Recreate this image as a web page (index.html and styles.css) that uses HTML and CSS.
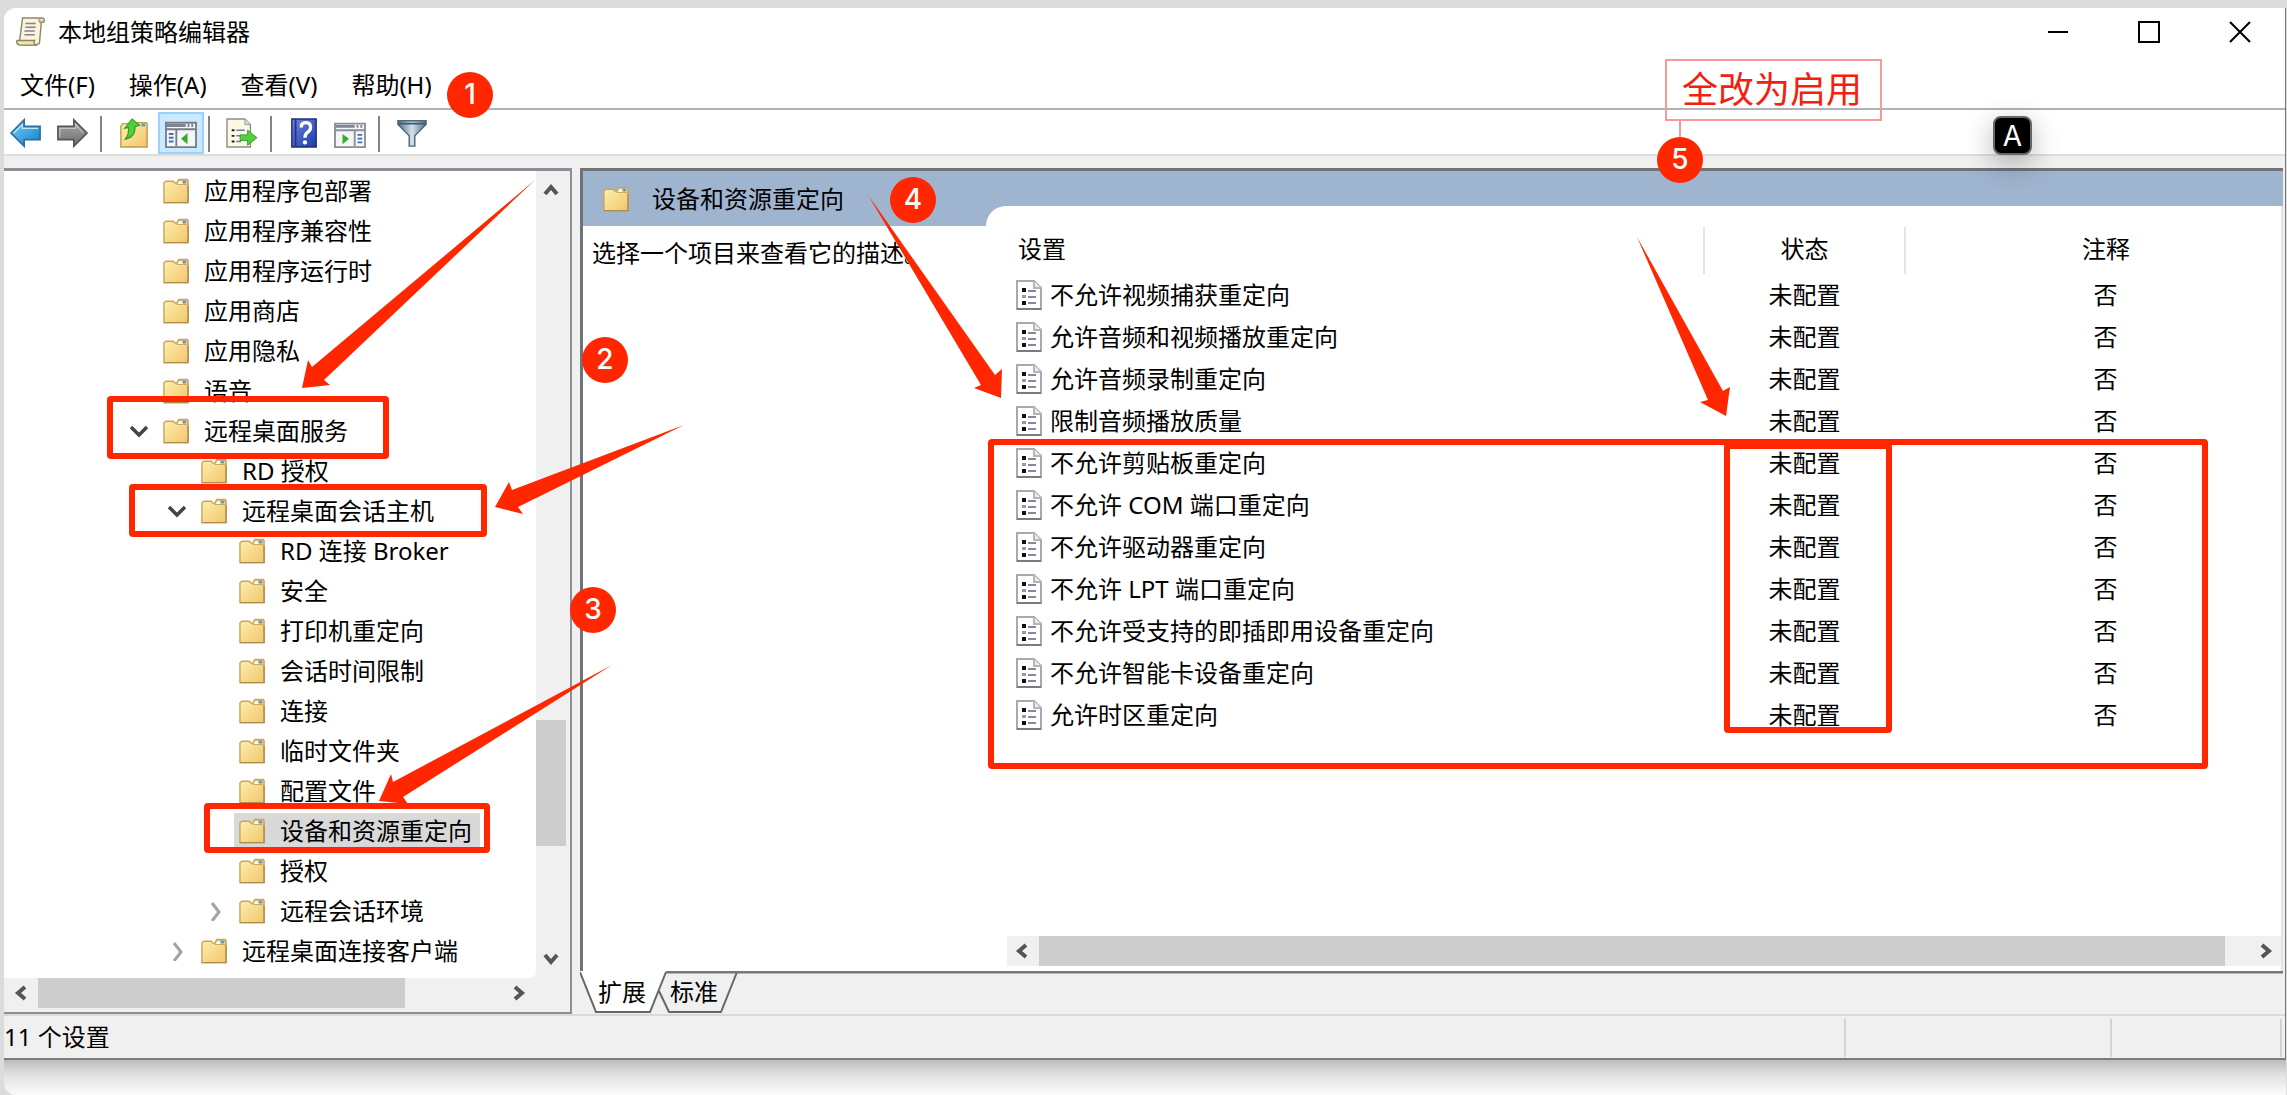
FILE: index.html
```html
<!DOCTYPE html>
<html lang="zh-CN">
<head>
<meta charset="utf-8">
<title>本地组策略编辑器</title>
<link rel="stylesheet" href="styles.css">
</head>
<body>
<svg class="defs" aria-hidden="true">
  <defs>
    <linearGradient id="gFolder" x1="0" y1="0" x2="1" y2="1"><stop offset="0" stop-color="#fff0b0"/><stop offset="1" stop-color="#efc66c"/></linearGradient>
    <linearGradient id="gBlue" x1="0" y1="0" x2="1" y2="1"><stop offset="0" stop-color="#7fd0f8"/><stop offset="1" stop-color="#0a7fd0"/></linearGradient>
    <linearGradient id="gGray" x1="0" y1="0" x2="0" y2="1"><stop offset="0" stop-color="#a8a8a8"/><stop offset="1" stop-color="#6f6f6f"/></linearGradient>
    <linearGradient id="gHelp" x1="0" y1="0" x2="1" y2="1"><stop offset="0" stop-color="#6c86e0"/><stop offset="1" stop-color="#1c3aa8"/></linearGradient>
    <linearGradient id="gFunnel" x1="0" y1="0" x2="1" y2="0"><stop offset="0" stop-color="#4f6f86"/><stop offset=".5" stop-color="#d4e2ea"/><stop offset="1" stop-color="#4f6f86"/></linearGradient>
  </defs>
  <symbol id="folder" viewBox="0 0 28 28">
    <path d="M1 5.500l2-2h8l2 2h2l2-4h9l1 1v24H1z" fill="url(#gFolder)" stroke="#cba45a" stroke-width="1.500"/>
    <path d="M15 7l2-4.500h9V7z" fill="#fdf6dc" stroke="#cba45a"/><rect x="21" y="3" width="4" height="3" fill="#5a9bd0"/>
    <path d="M1 26.500h26V8" fill="none" stroke="#b08c48" stroke-width="1.500"/>
  </symbol>
  <symbol id="policy" viewBox="0 0 26 30">
    <path d="M1 1h17l7 7v21H1z" fill="#fff" stroke="#a9a9a9" stroke-width="2"/><path d="M18 1v7h7" fill="#ececec" stroke="#b5b5b5" stroke-width="2"/>
    <path d="M1 29h24" stroke="#7c7c7c" stroke-width="2"/>
    <path d="M6 8h4v4H6zM6 21h4v4H6z" fill="#111"/><path d="M6 15h4v3H6z" fill="#9a98a8"/>
    <path d="M12 11h8M12 17h8M12 23h8" stroke="#8a879c" stroke-width="2"/>
  </symbol>
  <symbol id="down" viewBox="0 0 20 20"><path d="M2 6l8 8 8-8" fill="none" stroke="#444" stroke-width="3.500"/></symbol>
  <symbol id="right" viewBox="0 0 20 20"><path d="M7 2l7 9-7 9" fill="none" stroke="#a3a3a3" stroke-width="3"/></symbol>
  <symbol id="arrow" viewBox="0 0 16 16"><path d="M2 11l6-7 6 7" fill="none" stroke="#555" stroke-width="4"/></symbol>
</svg>

<main class="window">
  <header class="titlebar">
    <svg class="app-icon" viewBox="0 0 32 32"><path d="M7 1h20q4 0 3 4l-3 1-2 22-4 2H6L4 24z" fill="#fbf4d8" stroke="#8d8768" stroke-width="1.500"/><path d="M25 2q-2 4 2 4l3-1" fill="#c9bd90" stroke="#8d8768"/><path d="M1 25h19q-2 3 1 5H4q-4-1-3-5z" fill="#f4e5ad" stroke="#8d8768" stroke-width="1.500"/><path d="M10 7h11M10 11h11M9 15h11M9 19h11" stroke="#83819f" stroke-width="1.500"/></svg>
    <h1>本地组策略编辑器</h1>
    <div class="window-buttons">
      <button type="button" aria-label="最小化"><svg viewBox="0 0 24 24"><path d="M2 12h20" stroke="#000" stroke-width="2"/></svg></button>
      <button type="button" aria-label="最大化"><svg viewBox="0 0 24 24"><path d="M2 2h20v20H2z" fill="none" stroke="#000" stroke-width="2"/></svg></button>
      <button type="button" aria-label="关闭"><svg viewBox="0 0 24 24"><path d="M2 2l20 20M22 2L2 22" stroke="#000" stroke-width="2"/></svg></button>
    </div>
  </header>

  <nav class="menubar">
    <button type="button">文件(F)</button><button type="button">操作(A)</button><button type="button">查看(V)</button><button type="button">帮助(H)</button>
  </nav>

  <div class="toolbar">
    <button type="button" aria-label="后退"><svg viewBox="0 0 34 32"><path d="M1 16L15 2v7h17v14H15v7z" fill="url(#gBlue)" stroke="#2c6fa8" stroke-width="1.800"/><path d="M4 16l9-9v4h17" fill="none" stroke="#bfe8ff" stroke-width="1.200"/></svg></button>
    <button type="button" aria-label="前进"><svg viewBox="0 0 34 32"><path d="M33 16L19 2v7H2v14h17v7z" fill="url(#gGray)" stroke="#555" stroke-width="1.800"/><path d="M4 21V11h17V7l8 9" fill="none" stroke="#c4c4c4" stroke-width="1.200"/></svg></button>
    <span class="sep"></span>
    <button type="button" aria-label="上一级"><svg viewBox="0 0 34 32"><path d="M3 9l2-3h8l2 3h4l2-4h9l1 1v25H3z" fill="url(#gFolder)" stroke="#c09a4c" stroke-width="1.500"/><rect x="25" y="6" width="4" height="3" fill="#5a9bd0"/><path d="M7 23q5-4 4-13l-4 1 8-10 8 7-5 1q1 11-11 14z" fill="#52cf3d" stroke="#2f9a24" stroke-width="1.200"/></svg></button>
    <button type="button" class="active" aria-label="显示/隐藏控制台树" aria-pressed="true"><svg viewBox="0 0 34 32"><path d="M1 5h32v26H1z" fill="#f5f6f8" stroke="#777d88" stroke-width="2"/><path d="M2 8h20M24 8h2M28 8h2" stroke="#7d8794" stroke-width="3"/><path d="M1 12h32M12 12v18" stroke="#777d88" stroke-width="2"/><path d="M4 17h5M4 21h5M4 25h5" stroke="#3e6fb4" stroke-width="2"/><path d="M24 16v12l-7-6z" fill="#35ad24"/></svg></button>
    <span class="sep"></span>
    <button type="button" aria-label="导出列表"><svg viewBox="0 0 34 32"><path d="M1 1h19l6 6v24H1z" fill="#fbf9e6" stroke="#8e8c80" stroke-width="1.500"/><path d="M20 1v6h6" fill="#e2dfd0" stroke="#999"/><path d="M6 12h3v2H6zM6 18h3v2H6zM6 24h3v2H6z" fill="#222"/><path d="M11 13h9M11 19h5M11 25h5" stroke="#77749a" stroke-width="1.500"/><path d="M15 18h8v-5l10 8-10 8v-5h-8z" fill="#55cf3e" stroke="#369c28"/></svg></button>
    <span class="sep"></span>
    <button type="button" aria-label="帮助"><svg viewBox="0 0 34 32"><path d="M4 1h26v30H4z" fill="url(#gHelp)" stroke="#203078" stroke-width="1.500"/><path d="M8 1v30" stroke="#22368c" stroke-width="2"/><path d="M14 10q0-5 5-5t5 5q0 3-3 5t-3 6" fill="none" stroke="#fff" stroke-width="3.500"/><circle cx="18" cy="26" r="2.300" fill="#fff"/></svg></button>
    <button type="button" aria-label="显示/隐藏操作窗格"><svg viewBox="0 0 34 32"><path d="M1 6h32v25H1z" fill="#f5f6f8" stroke="#8a8e96" stroke-width="2"/><path d="M2 9h20M24 9h2M28 9h2" stroke="#7d8794" stroke-width="3"/><path d="M1 13h32M22 13v17" stroke="#8a8e96" stroke-width="2"/><path d="M25 18h5M25 22h5M25 26h5" stroke="#3e6fb4" stroke-width="2"/><path d="M9 17v11l7-6z" fill="#35ad24"/></svg></button>
    <span class="sep"></span>
    <button type="button" aria-label="筛选"><svg viewBox="0 0 34 32"><path d="M2 3h30v4L20 19v11h-6V19L2 7z" fill="url(#gFunnel)" stroke="#4d687b" stroke-width="1.500"/><path d="M3 6h28" stroke="#3f5a6e" stroke-width="2"/></svg></button>
  </div>

  <div class="panes">
    <section class="tree-pane">
      <ul class="tree">
        <li><span class="twist"></span><span class="node"><svg><use href="#folder"/></svg>应用程序包部署</span></li>
        <li><span class="twist"></span><span class="node"><svg><use href="#folder"/></svg>应用程序兼容性</span></li>
        <li><span class="twist"></span><span class="node"><svg><use href="#folder"/></svg>应用程序运行时</span></li>
        <li><span class="twist"></span><span class="node"><svg><use href="#folder"/></svg>应用商店</span></li>
        <li><span class="twist"></span><span class="node"><svg><use href="#folder"/></svg>应用隐私</span></li>
        <li><span class="twist"></span><span class="node"><svg><use href="#folder"/></svg>语音</span></li>
        <li><svg class="twist"><use href="#down"/></svg><span class="node"><svg><use href="#folder"/></svg>远程桌面服务</span></li>
        <li class="l2"><span class="twist"></span><span class="node"><svg><use href="#folder"/></svg>RD 授权</span></li>
        <li class="l2"><svg class="twist"><use href="#down"/></svg><span class="node"><svg><use href="#folder"/></svg>远程桌面会话主机</span></li>
        <li class="l3"><span class="twist"></span><span class="node"><svg><use href="#folder"/></svg>RD 连接 Broker</span></li>
        <li class="l3"><span class="twist"></span><span class="node"><svg><use href="#folder"/></svg>安全</span></li>
        <li class="l3"><span class="twist"></span><span class="node"><svg><use href="#folder"/></svg>打印机重定向</span></li>
        <li class="l3"><span class="twist"></span><span class="node"><svg><use href="#folder"/></svg>会话时间限制</span></li>
        <li class="l3"><span class="twist"></span><span class="node"><svg><use href="#folder"/></svg>连接</span></li>
        <li class="l3"><span class="twist"></span><span class="node"><svg><use href="#folder"/></svg>临时文件夹</span></li>
        <li class="l3"><span class="twist"></span><span class="node"><svg><use href="#folder"/></svg>配置文件</span></li>
        <li class="l3"><span class="twist"></span><span class="node selected"><svg><use href="#folder"/></svg>设备和资源重定向</span></li>
        <li class="l3"><span class="twist"></span><span class="node"><svg><use href="#folder"/></svg>授权</span></li>
        <li class="l3"><svg class="twist"><use href="#right"/></svg><span class="node"><svg><use href="#folder"/></svg>远程会话环境</span></li>
        <li class="l2"><svg class="twist"><use href="#right"/></svg><span class="node"><svg><use href="#folder"/></svg>远程桌面连接客户端</span></li>
      </ul>
      <div class="scroll vertical">
        <button type="button" aria-label="向上滚动"><svg><use href="#arrow"/></svg></button>
        <div class="track"><div class="thumb"></div></div>
        <button type="button" class="to-down" aria-label="向下滚动"><svg><use href="#arrow"/></svg></button>
      </div>
      <div class="scroll horizontal tree-scroll">
        <button type="button" class="to-left" aria-label="向左滚动"><svg><use href="#arrow"/></svg></button>
        <div class="track"><div class="thumb"></div></div>
        <button type="button" class="to-right" aria-label="向右滚动"><svg><use href="#arrow"/></svg></button>
      </div>
    </section>

    <section class="detail-pane">
      <div class="detail">
        <div class="summary">
          <h2><svg><use href="#folder"/></svg>设备和资源重定向</h2>
          <p>选择一个项目来查看它的描述。</p>
        </div>
        <div class="list-wrap">
          <div class="list">
            <table>
              <colgroup><col><col class="c-state"><col class="c-note"></colgroup>
              <thead><tr><th>设置</th><th>状态</th><th>注释</th></tr></thead>
              <tbody>
                <tr><td><svg><use href="#policy"/></svg>不允许视频捕获重定向</td><td>未配置</td><td>否</td></tr>
                <tr><td><svg><use href="#policy"/></svg>允许音频和视频播放重定向</td><td>未配置</td><td>否</td></tr>
                <tr><td><svg><use href="#policy"/></svg>允许音频录制重定向</td><td>未配置</td><td>否</td></tr>
                <tr><td><svg><use href="#policy"/></svg>限制音频播放质量</td><td>未配置</td><td>否</td></tr>
                <tr><td><svg><use href="#policy"/></svg>不允许剪贴板重定向</td><td>未配置</td><td>否</td></tr>
                <tr><td><svg><use href="#policy"/></svg>不允许 COM 端口重定向</td><td>未配置</td><td>否</td></tr>
                <tr><td><svg><use href="#policy"/></svg>不允许驱动器重定向</td><td>未配置</td><td>否</td></tr>
                <tr><td><svg><use href="#policy"/></svg>不允许 LPT 端口重定向</td><td>未配置</td><td>否</td></tr>
                <tr><td><svg><use href="#policy"/></svg>不允许受支持的即插即用设备重定向</td><td>未配置</td><td>否</td></tr>
                <tr><td><svg><use href="#policy"/></svg>不允许智能卡设备重定向</td><td>未配置</td><td>否</td></tr>
                <tr><td><svg><use href="#policy"/></svg>允许时区重定向</td><td>未配置</td><td>否</td></tr>
              </tbody>
            </table>
            <div class="scroll horizontal list-scroll">
              <button type="button" class="to-left" aria-label="向左滚动"><svg><use href="#arrow"/></svg></button>
              <div class="track"><div class="thumb"></div></div>
              <button type="button" class="to-right" aria-label="向右滚动"><svg><use href="#arrow"/></svg></button>
            </div>
          </div>
        </div>
      </div>
      <div class="tabs">
        <svg class="tab-shapes" aria-hidden="true">
          <path d="M0 0h86L70 41H16z" fill="#fff"/>
          <path d="M0 1l16 40h54L86 1" fill="none" stroke="#666" stroke-width="2"/>
          <path d="M79 20l10 21h52L157 1" fill="none" stroke="#666" stroke-width="2"/>
          <line x1="86" y1="1" x2="100%" y2="1" stroke="#777" stroke-width="3"/>
        </svg>
        <button type="button">扩展</button><button type="button">标准</button>
      </div>
    </section>
  </div>

  <footer class="statusbar"><span>11 个设置</span><span></span><span></span></footer>
</main>
<div class="window-shadow"></div>

<div class="annotations">
  <div class="box b1"></div><div class="box b2"></div><div class="box b3"></div><div class="box b4"></div><div class="box b5"></div>
  <svg class="arrows" aria-hidden="true">
    <g fill="#ff2600">
      <path d="M535 180L312 367l-4-7-6 28 28-3-6-5z"/>
      <path d="M684 425L512 490l-3-8-14 25 28 7-5-7z"/>
      <path d="M612 665L393 782l-2-8-12 27 29 3-5-7z"/>
      <path d="M868 195L981 385l-7 3 27 10 1-29-7 6z"/>
      <path d="M1637 237l71 163-8 2 26 14 4-29-7 4z"/>
    </g>
    <path d="M1680 120v18" stroke="#f79a96" stroke-width="2"/>
  </svg>
  <span class="badge n1">1</span><span class="badge n2">2</span><span class="badge n3">3</span><span class="badge n4">4</span><span class="badge n5">5</span>
  <span class="callout">全改为启用</span>
  <span class="ime">A</span>
</div>
</body>
</html>
```
FILE: styles.css
```css
* { box-sizing: border-box; }

body {
  margin: 0;
  min-height: 100vh;
  padding: 8px 1px 0 4px;
  display: flex;
  flex-direction: column;
  position: relative;
  background: #dcdcdc;
  color: #000;
  font: 24px/36px "Noto Sans", "Noto Sans CJK SC", sans-serif;
}

button {
  padding: 0;
  border: 0;
  background: none;
  color: inherit;
  font: inherit;
}

h1, h2, p, ul { margin: 0; padding: 0; font-size: 24px; font-weight: 400; }
svg { display: block; flex: none; }
.defs { position: absolute; width: 0; height: 0; }

.window {
  flex: 1;
  display: flex;
  flex-direction: column;
  background: #f0f0f0;
  border-bottom: 2px solid #7b7b7b;
  border-right: 1px solid #777;
  border-radius: 12px 0 0 0;
  overflow: hidden;
}

/* Title and menus */
.titlebar { display: flex; align-items: center; height: 48px; padding-left: 12px; background: #fff; }
.app-icon { width: 30px; height: 32px; margin-right: 12px; }
.window-buttons { display: flex; margin-left: auto; }
.window-buttons button { width: 91px; height: 46px; display: grid; place-items: center; }
.window-buttons svg { width: 24px; height: 24px; }

.menubar { display: flex; gap: 34px; height: 54px; padding: 11px 16px 0; background: #fff; border-bottom: 2px solid #b0b2b6; }
.menubar button { height: 36px; }

.toolbar { display: flex; align-items: flex-end; gap: 2px; height: 46px; background: #fff; border-bottom: 2px solid #dedede; }
.toolbar button { width: 44px; height: 42px; display: grid; place-items: center; }
.toolbar svg { width: 32px; height: 30px; }
.toolbar .active { width: 46px; background: #cce8ff; border: 2px solid #99d1ff; }
.sep { width: 2px; height: 36px; margin: 0 8px 2px 4px; background: #858585; }
.active + .sep { margin-left: 2px; }

/* Panes */
.panes { flex: 1; display: grid; grid-template-columns: 568px minmax(0, 1fr); gap: 8px; padding-top: 12px; }

.tree-pane {
  display: grid;
  grid-template-columns: minmax(0, 1fr) 30px;
  grid-template-rows: minmax(0, 1fr) 30px;
  padding: 0 4px 4px 0;
  border: solid #8d8f98;
  border-width: 3px 2px 2px 0;
}
.tree { list-style: none; background: #fff; padding-bottom: 6px; border-radius: 0 0 6px 0; }
.tree li { display: flex; align-items: center; height: 40px; padding-left: 125px; }
.tree .l2 { padding-left: 163px; }
.tree .l3 { padding-left: 201px; }
.twist { width: 20px; height: 20px; margin-right: 9px; }
.node { display: flex; align-items: center; gap: 14px; height: 36px; padding: 0 8px 0 4px; white-space: nowrap; }
.node svg, h2 svg { width: 28px; height: 26px; }
.selected { background: #d9d9d9; }

.scroll { display: flex; background: #f0f0f0; }
.scroll button { width: 32px; height: 30px; display: grid; place-items: center; }
.scroll svg { width: 16px; height: 16px; }
.scroll .track { flex: 1; display: flex; }
.scroll .thumb { background: #cdcdcd; }
.vertical { flex-direction: column; }
.vertical button { width: 30px; height: 40px; }
.vertical .track { flex-direction: column; justify-content: flex-end; padding-bottom: 92px; }
.vertical .thumb { height: 126px; }
.to-down svg { transform: rotate(180deg); }
.to-left svg { transform: rotate(-90deg); }
.to-right svg { transform: rotate(90deg); }
.tree-scroll { padding: 0 2px; }
.tree-scroll .thumb { width: 79%; }

.detail-pane { display: flex; flex-direction: column; margin-right: 2px; }
.detail {
  flex: 1;
  display: grid;
  grid-template-columns: 403px minmax(0, 1fr);
  background: #fff;
  border: solid #6f7277;
  border-width: 3px 0 0 3px;
}
.summary h2 { display: flex; align-items: center; gap: 22px; height: 55px; padding-left: 19px; background: #9fb4cf; }
.summary p { padding: 9px 9px; white-space: nowrap; }
.list-wrap { display: flex; padding-top: 35px; background: #9fb4cf; }
.list {
  flex: 1;
  display: flex;
  flex-direction: column;
  padding: 21px 0 5px;
  background: #fff;
  border-right: 2px solid #e3e3e3;
  border-radius: 20px 0 0 0;
}

table { width: 100%; border-collapse: collapse; table-layout: fixed; }
.c-state { width: 201px; }
.c-note { width: 376px; }
th { height: 47px; padding: 0 0 3px; font-weight: 400; border-right: 2px solid #e5e5e5; }
th:first-child { padding-left: 32px; text-align: left; }
th:last-child { border: 0; }
td { height: 42px; padding: 0; text-align: center; }
td:first-child { display: flex; align-items: center; gap: 8px; padding-left: 30px; }
th:last-child, td:last-child { padding-left: 25px; }
td svg { width: 26px; height: 30px; }

.list-scroll { margin: auto 0 0 21px; }
.list-scroll .thumb { width: 98%; }

.tabs { position: relative; display: flex; gap: 24px; height: 43px; padding: 2px 0 0 18px; }
.tab-shapes { position: absolute; left: 0; top: 0; width: 100%; height: 43px; }
.tabs button { position: relative; height: 38px; }

.statusbar { display: flex; height: 44px; padding: 3px 3px 1px 0; border-top: 2px solid #dadada; }
.statusbar span { width: 170px; border-right: 2px solid #d4d4d4; }
.statusbar span:first-child { flex: 1; }
.statusbar span:nth-child(2) { width: 266px; }

.window-shadow { height: 35px; background: linear-gradient(#bcbcbc, #e3e3e3 45%, #fbfbfb); border-radius: 0 0 0 12px; }

/* Marks drawn over the window */
.annotations { position: absolute; inset: 0; pointer-events: none; }
.arrows { position: absolute; width: 100%; height: 100%; }
.box { position: absolute; border: 6px solid #ff2600; border-radius: 4px; }
.b1 { left: 107px; top: 396px; width: 282px; height: 63px; }
.b2 { left: 129px; top: 484px; width: 358px; height: 53px; }
.b3 { left: 204px; top: 803px; width: 286px; height: 50px; }
.b4 { left: 988px; top: 439px; width: 1220px; height: 330px; }
.b5 { left: 1724px; top: 443px; width: 168px; height: 290px; }
.badge {
  position: absolute;
  width: 46px;
  height: 46px;
  border-radius: 50%;
  background: #ff2600;
  color: #fff;
  font: 500 28px/44px Inter, sans-serif;
  text-align: center;
}
.n1 { left: 447px; top: 72px; }
.n2 { left: 582px; top: 337px; }
.n3 { left: 570px; top: 587px; }
.n4 { left: 890px; top: 177px; }
.n5 { left: 1657px; top: 137px; }
.callout {
  position: absolute;
  left: 1665px;
  top: 59px;
  width: 217px;
  padding: 0 15px;
  border: 2px solid #f79a96;
  color: #f5200c;
  font-size: 36px;
  line-height: 58px;
  white-space: nowrap;
}
.ime {
  position: absolute;
  left: 1993px;
  top: 116px;
  width: 39px;
  height: 39px;
  border: 2px solid #666;
  border-radius: 8px;
  background: #000;
  color: #fff;
  font: 28px/36px Inter, sans-serif;
  text-align: center;
  box-shadow: 0 8px 28px rgba(0, 0, 0, .3);
}
```
